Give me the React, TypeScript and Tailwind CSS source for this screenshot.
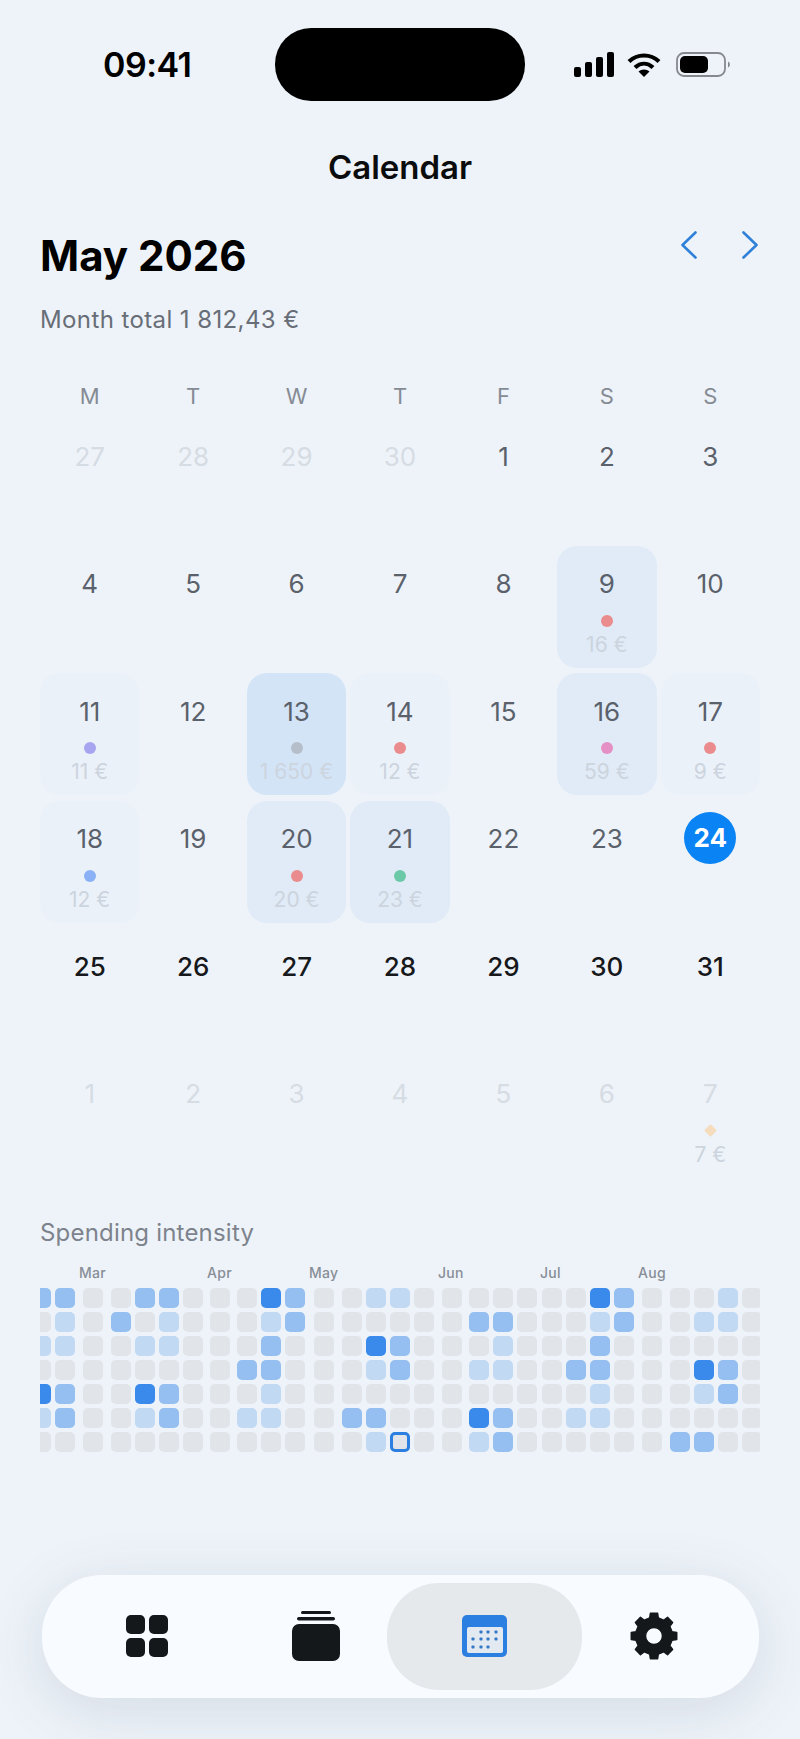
type Day = {
  n: number
  tone?: "dim" | "dark" | "today"
  bg?: "low" | "mid" | "high"
  dot?: string
  amount?: string
  diamond?: boolean
}

const days: Day[] = [
  { n: 27, tone: "dim" }, { n: 28, tone: "dim" }, { n: 29, tone: "dim" }, { n: 30, tone: "dim" },
  { n: 1 }, { n: 2 }, { n: 3 },
  { n: 4 }, { n: 5 }, { n: 6 }, { n: 7 }, { n: 8 },
  { n: 9, bg: "mid", dot: "bg-[#ea8b8d]", amount: "16 €" },
  { n: 10 },
  { n: 11, bg: "low", dot: "bg-[#a7a5f0]", amount: "11 €" },
  { n: 12 },
  { n: 13, bg: "high", dot: "bg-[#b6bfc9]", amount: "1 650 €" },
  { n: 14, bg: "low", dot: "bg-[#ea8b8d]", amount: "12 €" },
  { n: 15 },
  { n: 16, bg: "mid", dot: "bg-[#e590c4]", amount: "59 €" },
  { n: 17, bg: "low", dot: "bg-[#ea8b8d]", amount: "9 €" },
  { n: 18, bg: "low", dot: "bg-[#8ab1f5]", amount: "12 €" },
  { n: 19 },
  { n: 20, bg: "mid", dot: "bg-[#ea8b8d]", amount: "20 €" },
  { n: 21, bg: "mid", dot: "bg-[#6cc9a7]", amount: "23 €" },
  { n: 22 }, { n: 23 },
  { n: 24, tone: "today" },
  { n: 25, tone: "dark" }, { n: 26, tone: "dark" }, { n: 27, tone: "dark" }, { n: 28, tone: "dark" },
  { n: 29, tone: "dark" }, { n: 30, tone: "dark" }, { n: 31, tone: "dark" },
  { n: 1, tone: "dim" }, { n: 2, tone: "dim" }, { n: 3, tone: "dim" }, { n: 4, tone: "dim" },
  { n: 5, tone: "dim" }, { n: 6, tone: "dim" },
  { n: 7, tone: "dim", diamond: true, amount: "7 €" },
]

const weekdays = ["M", "T", "W", "T", "F", "S", "S"]

// one string per row, one digit per week column; 4 marks today
const heat = [
  "22002200032001100000003200010",
  "01020100012000000220001200110",
  "11001100020003200010002000000",
  "00000000220001200110022000320",
  "32003200010000000000001000120",
  "12001200110022000320011000000",
  "00000000000001400120000002200",
]

const colGaps = [
  "-ml-[9px]", "ml-1", "ml-2", "ml-2", "ml-1", "ml-1", "ml-1", "ml-[7px]", "ml-[7px]", "ml-1",
  "ml-1", "ml-[9px]", "ml-2", "ml-1", "ml-1", "ml-1", "ml-2", "ml-[7px]", "ml-1", "ml-1",
  "ml-[5px]", "ml-1", "ml-1", "ml-1", "ml-2", "ml-2", "ml-1", "ml-1", "ml-1",
]

const heatColors = ["bg-[#e1e4e9]", "bg-[#c2d9f3]", "bg-[#95bff0]", "bg-[#3a8aeb]"]

const months = [
  { label: "Mar", w: "w-[128px]" },
  { label: "Apr", w: "w-[102px]" },
  { label: "May", w: "w-[129px]" },
  { label: "Jun", w: "w-[102px]" },
  { label: "Jul", w: "w-[98px]" },
  { label: "Aug", w: "w-[80px]" },
]

const gearPath = (() => {
  const pts: string[] = []
  const teeth = 8
  for (let i = 0; i < teeth; i++) {
    const a = (i / teeth) * Math.PI * 2 - Math.PI / 2
    const step = (Math.PI * 2) / teeth
    const add = (r: number, off: number) => {
      const x = 24 + r * Math.cos(a + off * step)
      const y = 24 + r * Math.sin(a + off * step)
      pts.push(`${x.toFixed(2)} ${y.toFixed(2)}`)
    }
    add(18.5, -0.3)
    add(23, -0.2)
    add(23, 0.2)
    add(18.5, 0.3)
  }
  return `M${pts.join("L")}Z M24 15.5a8.5 8.5 0 1 0 0 17a8.5 8.5 0 1 0 0-17Z`
})()

function DayCell({ day }: { day: Day }) {
  const bg = day.bg === "high" ? "bg-[#d4e4f7]" : day.bg === "mid" ? "bg-[#e0ebf7]" : day.bg === "low" ? "bg-[#ebf1f9]" : ""
  const color =
    day.tone === "dim" ? "text-[#d6dce3]" : day.tone === "dark" ? "text-[#16181b] font-medium" : "text-[#5a616b]"
  return (
    <div className={`h-[122px] rounded-[20px] flex flex-col items-center pt-[23px] ${bg}`}>
      <div className={`h-[30px] flex items-center justify-center text-[26px] ${color}`}>
        {day.tone === "today" ? (
          <span className="w-[52px] h-[52px] shrink-0 -mt-[2px] rounded-full bg-[#0a84f5] text-white font-bold flex items-center justify-center">
            {day.n}
          </span>
        ) : (
          day.n
        )}
      </div>
      {day.dot && <div className={`mt-[16px] w-3 h-3 rounded-full ${day.dot}`} />}
      {day.diamond && <div className="mt-[16px] w-3 h-3 flex items-center justify-center"><div className="w-[9px] h-[9px] rotate-45 rounded-[1px] bg-[#f4dcbd]" /></div>}
      {day.amount && (
        <div className="mt-[6px] leading-[24px] text-[21px] text-[#ccd4de] whitespace-nowrap">{day.amount}</div>
      )}
    </div>
  )
}

function StatusIcons() {
  return (
    <div className="flex items-center gap-[13px]">
      <svg width="40" height="25" viewBox="0 0 40 25" fill="#000">
        <rect x="0" y="15" width="7" height="10" rx="2" />
        <rect x="11" y="10" width="7" height="15" rx="2" />
        <rect x="22" y="5" width="7" height="20" rx="2" />
        <rect x="33" y="0" width="7" height="25" rx="2" />
      </svg>
      <svg width="34" height="24" viewBox="0 0 34 24" fill="none" stroke="#000" strokeWidth="4.2">
        <path d="M2 8.5C10.5 .5 23.5 .5 32 8.5" />
        <path d="M8 14.5C13.5 9.5 20.5 9.5 26 14.5" />
        <path d="M17 24L11.5 18.5C14.5 15.8 19.5 15.8 22.5 18.5Z" fill="#000" stroke="none" />
      </svg>
      <svg width="55" height="25" viewBox="0 0 55 25" className="ml-[2px]">
        <rect x="1" y="1" width="48" height="23" rx="7" fill="none" stroke="#85888c" strokeWidth="1.8" />
        <rect x="4" y="4" width="28" height="17" rx="5" fill="#000" />
        <path d="M52 9.5C54.5 10.5 54.5 14.5 52 15.5Z" fill="#85888c" />
      </svg>
    </div>
  )
}

function NavIcons({ kind }: { kind: "grid" | "stack" | "calendar" | "gear" }) {
  if (kind === "grid") {
    return (
      <div className="grid grid-cols-2 gap-[4px]">
        {[0, 1, 2, 3].map((i) => (
          <div key={i} className="w-[19px] h-[19px] rounded-[5px] bg-[#14181b]" />
        ))}
      </div>
    )
  }
  if (kind === "stack") {
    return (
      <svg width="48" height="50" viewBox="0 0 48 50" fill="#14181b">
        <rect x="9" y="0" width="30" height="3" rx="1.5" />
        <rect x="5" y="6" width="38" height="3.5" rx="1.75" />
        <rect x="0" y="13" width="48" height="37" rx="7" />
      </svg>
    )
  }
  if (kind === "calendar") {
    const dots = [
      [19, 17], [26, 17], [34, 17],
      [11, 24], [19, 24], [26, 24], [34, 24],
      [11, 32], [19, 32], [26, 32],
    ]
    return (
      <svg width="45" height="42" viewBox="0 0 45 42">
        <rect width="45" height="42" rx="5" fill="#2b7fe0" />
        <rect x="5" y="12" width="36" height="26" rx="2" fill="#e3e9f1" />
        {dots.map(([x, y]) => (
          <rect key={`${x}-${y}`} x={x - 1.5} y={y - 1.5} width="3" height="3" rx="0.8" fill="#3478c8" />
        ))}
      </svg>
    )
  }
  return (
    <svg width="48" height="48" viewBox="0 0 48 48">
      <path d={gearPath} fill="#14181b" fillRule="evenodd" stroke="#14181b" strokeWidth="1.5" strokeLinejoin="round" />
    </svg>
  )
}

export default function App() {
  return (
    <div className="w-[800px] h-[1739px] overflow-hidden bg-[#eef3f9] font-['Inter',sans-serif]">
      <div className="pt-[28px] h-[101px] flex items-center">
        <div className="w-[275px] pl-[103px] text-[34px] font-semibold text-black tracking-[-0.5px]">09:41</div>
        <div className="w-[250px] h-[73px] rounded-[36px] bg-black shrink-0" />
        <div className="pl-[49px]"><StatusIcons /></div>
      </div>

      <div className="mt-[47px] h-[40px] flex items-center justify-center text-[33px] font-semibold text-[#0b0c0e]">Calendar</div>

      <div className="mt-[45px] mx-[40px] h-[44px] flex items-center justify-between">
        <div className="text-[42px] font-bold text-black">May 2026</div>
        <div className="flex items-center gap-[45px] -mt-[20px] mr-[2px]">
          <svg width="16" height="28" viewBox="0 0 16 28" fill="none" stroke="#2f80d8" strokeWidth="2.6" strokeLinecap="round" strokeLinejoin="round">
            <path d="M14.5 1.5L1.5 14L14.5 26.5" />
          </svg>
          <svg width="16" height="28" viewBox="0 0 16 28" fill="none" stroke="#2f80d8" strokeWidth="2.6" strokeLinecap="round" strokeLinejoin="round">
            <path d="M1.5 1.5L14.5 14L1.5 26.5" />
          </svg>
        </div>
      </div>

      <div className="mt-[28px] mx-[40px] h-[30px] flex items-center text-[24px] tracking-[0.4px] text-[#686e77]">Month total 1 812,43 €</div>

      <div className="mt-[45px] mx-[40px] h-[30px] grid grid-cols-7 gap-x-1">
        {weekdays.map((d, i) => (
          <div key={i} className="flex items-center justify-center text-[22px] text-[#858b94]">{d}</div>
        ))}
      </div>

      <div className="mt-[8px] mx-[40px] grid grid-cols-7 gap-x-1 gap-y-[5.5px]">
        {days.map((d, i) => (
          <DayCell key={i} day={d} />
        ))}
      </div>

      <div className="mt-[41px] mx-[40px] h-[28px] flex items-center text-[24px] tracking-[0.2px] text-[#7d838c]">Spending intensity</div>

      <div className="mt-[16px] ml-[79px] h-[20px] flex items-center text-[14px] font-medium tracking-[0.3px] text-[#888e97]">
        {months.map((m) => (
          <div key={m.label} className={`${m.w} shrink-0`}>{m.label}</div>
        ))}
      </div>

      <div className="mt-[5px] mx-[40px] flex overflow-hidden">
        {colGaps.map((gap, c) => (
          <div key={c} className={`w-5 shrink-0 flex flex-col gap-1 ${gap}`}>
            {heat.map((row, r) =>
              row[c] === "4" ? (
                <div key={r} className="h-5 rounded-[5px] bg-[#e1e4e9] border-[3px] border-[#2b7fe0]" />
              ) : (
                <div key={r} className={`h-5 rounded-[5px] ${heatColors[Number(row[c])]}`} />
              ),
            )}
          </div>
        ))}
      </div>

      <div className="mt-[123px] ml-[42px] w-[717px] h-[123px] rounded-[60px] bg-[#f8fbff] shadow-[0_12px_60px_rgba(60,75,100,0.14)] pl-[20px] pr-[21px] grid grid-cols-4 items-center">
        <div className="flex items-center justify-center"><NavIcons kind="grid" /></div>
        <div className="flex items-center justify-center"><NavIcons kind="stack" /></div>
        <div className="flex items-center justify-center">
          <div className="w-[195px] h-[107px] shrink-0 rounded-[52px] bg-[#e6e9ec] flex items-center justify-center"><NavIcons kind="calendar" /></div>
        </div>
        <div className="flex items-center justify-center"><NavIcons kind="gear" /></div>
      </div>
    </div>
  )
}
